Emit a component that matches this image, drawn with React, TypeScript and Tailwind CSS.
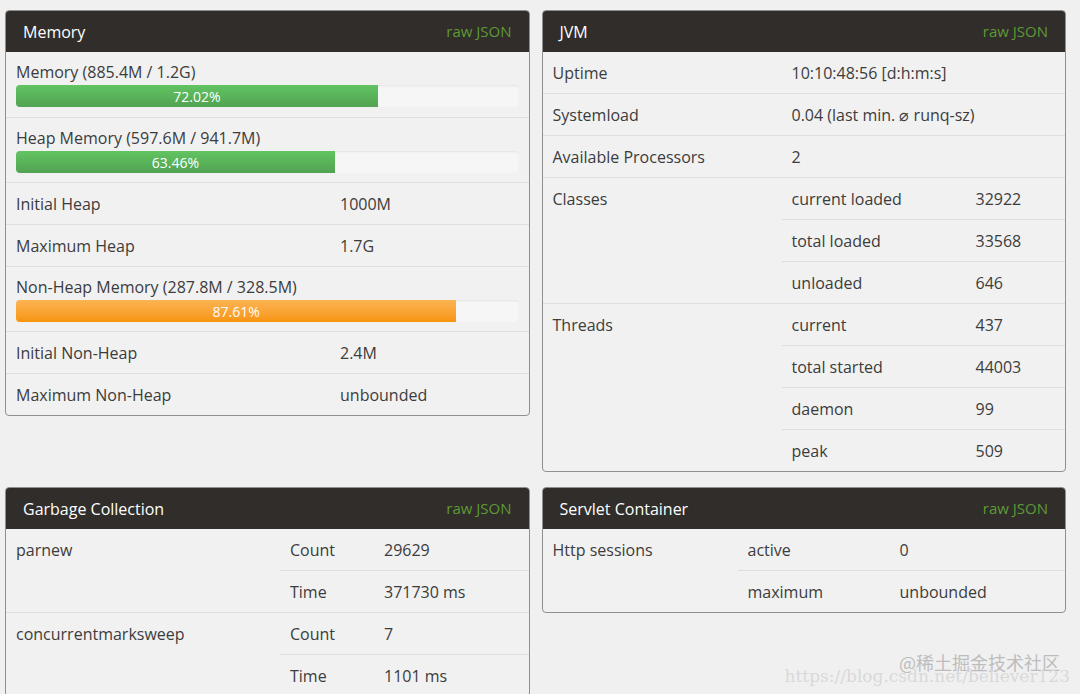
import React from "react";

const font = { fontFamily: '"Open Sans", "Noto Sans", sans-serif' };

function Panel({ title, children }: { title: string; children: React.ReactNode }) {
  return (
    <div className="rounded-[4px] border border-[#8f8f8f] bg-[#f1f1f1] overflow-hidden">
      <div className="flex h-[41px] items-center justify-between bg-[#302d2a] px-[17px]">
        <span className="text-[16px] text-white">{title}</span>
        <span className="text-[15px] text-[#5d9a34]">raw JSON</span>
      </div>
      {children}
    </div>
  );
}

function Bar({
  label,
  pct,
  color,
  top,
}: {
  label: string;
  pct: number;
  color: "green" | "orange";
  top?: boolean;
}) {
  const fill =
    color === "green"
      ? "bg-gradient-to-b from-[#62c462] to-[#51a351]"
      : "bg-gradient-to-b from-[#fbb450] to-[#f89406]";
  return (
    <div className={`h-[65px] px-[10px] pt-[10px] ${top ? "" : "border-t border-[#dedede]"}`}>
      <div className="text-[16px] leading-[20px] text-[#3c3c3c]">{label}</div>
      <div className="mt-[3px] h-[22px] overflow-hidden rounded-[4px] bg-[#f6f6f6] shadow-[inset_0_1px_2px_rgba(0,0,0,0.08)]">
        <div
          className={`flex h-full items-center justify-center text-[14px] text-white ${fill}`}
          style={{ width: `${pct}%` }}
        >
          {pct.toFixed(2)}%
        </div>
      </div>
    </div>
  );
}

function Row({ k, v, split, top }: { k: string; v: string; split: string; top?: boolean }) {
  return (
    <div
      className={`flex items-center text-[16px] text-[#3c3c3c] ${
        top ? "h-[41px]" : "h-[42px] border-t border-[#dedede]"
      }`}
    >
      <div className={`${split} shrink-0 pl-[10px]`}>{k}</div>
      <div className="pl-[10px]">{v}</div>
    </div>
  );
}

function Group({
  name,
  rows,
  split,
  sub,
  first,
}: {
  name: string;
  rows: [string, string][];
  split: string;
  sub: string;
  first?: boolean;
}) {
  return (
    <div className={`flex text-[16px] text-[#3c3c3c] ${first ? "" : "border-t border-[#dedede]"}`}>
      <div className={`${split} shrink-0 pl-[10px] pt-[9px]`}>{name}</div>
      <div className="flex-1">
        {rows.map(([k, v], i) => (
          <div
            key={k + i}
            className={`flex items-center ${i > 0 ? "h-[42px] border-t border-[#dedede]" : "h-[41px]"}`}
          >
            <div className={`${sub} shrink-0 pl-[10px]`}>{k}</div>
            <div className="pl-[10px]">{v}</div>
          </div>
        ))}
      </div>
    </div>
  );
}

export default function App() {
  return (
    <div className="relative min-h-[694px] overflow-hidden bg-[#f0f0f0] pl-[5px] pt-[10px]" style={font}>
      <div className="grid w-[1061px] grid-cols-2 items-start gap-x-[12px] gap-y-[15px]">
        <Panel title="Memory">
          <Bar top label="Memory (885.4M / 1.2G)" pct={72.02} color="green" />
          <Bar label="Heap Memory (597.6M / 941.7M)" pct={63.46} color="green" />
          <Row k="Initial Heap" v="1000M" split="w-[324px]" />
          <Row k="Maximum Heap" v="1.7G" split="w-[324px]" />
          <Bar label="Non-Heap Memory (287.8M / 328.5M)" pct={87.61} color="orange" />
          <Row k="Initial Non-Heap" v="2.4M" split="w-[324px]" />
          <Row k="Maximum Non-Heap" v="unbounded" split="w-[324px]" />
        </Panel>

        <Panel title="JVM">
          <Row top k="Uptime" v="10:10:48:56 [d:h:m:s]" split="w-[239px]" />
          <Row k="Systemload" v="0.04 (last min. ⌀ runq-sz)" split="w-[239px]" />
          <Row k="Available Processors" v="2" split="w-[239px]" />
          <Group
            name="Classes"
            split="w-[239px]"
            sub="w-[184px]"
            rows={[
              ["current loaded", "32922"],
              ["total loaded", "33568"],
              ["unloaded", "646"],
            ]}
          />
          <Group
            name="Threads"
            split="w-[239px]"
            sub="w-[184px]"
            rows={[
              ["current", "437"],
              ["total started", "44003"],
              ["daemon", "99"],
              ["peak", "509"],
            ]}
          />
        </Panel>

        <Panel title="Garbage Collection">
          <Group
            first
            name="parnew"
            split="w-[274px]"
            sub="w-[94px]"
            rows={[
              ["Count", "29629"],
              ["Time", "371730 ms"],
            ]}
          />
          <Group
            name="concurrentmarksweep"
            split="w-[274px]"
            sub="w-[94px]"
            rows={[
              ["Count", "7"],
              ["Time", "1101 ms"],
            ]}
          />
        </Panel>

        <Panel title="Servlet Container">
          <Group
            first
            name="Http sessions"
            split="w-[195px]"
            sub="w-[152px]"
            rows={[
              ["active", "0"],
              ["maximum", "unbounded"],
            ]}
          />
        </Panel>
      </div>

      <div
        className="pointer-events-none absolute right-[20px] top-[650px] text-[18px] leading-[24px] text-[#bdbdbd]"
        style={{ fontFamily: '"Noto Sans CJK SC", sans-serif' }}
      >
        @稀土掘金技术社区
      </div>
      <div
        className="pointer-events-none absolute right-[10px] top-[666px] text-[17px] leading-[20px] text-[#d9d9d9]"
        style={{ fontFamily: '"DejaVu Serif", serif' }}
      >
        https://blog.csdn.net/believer123
      </div>
    </div>
  );
}
